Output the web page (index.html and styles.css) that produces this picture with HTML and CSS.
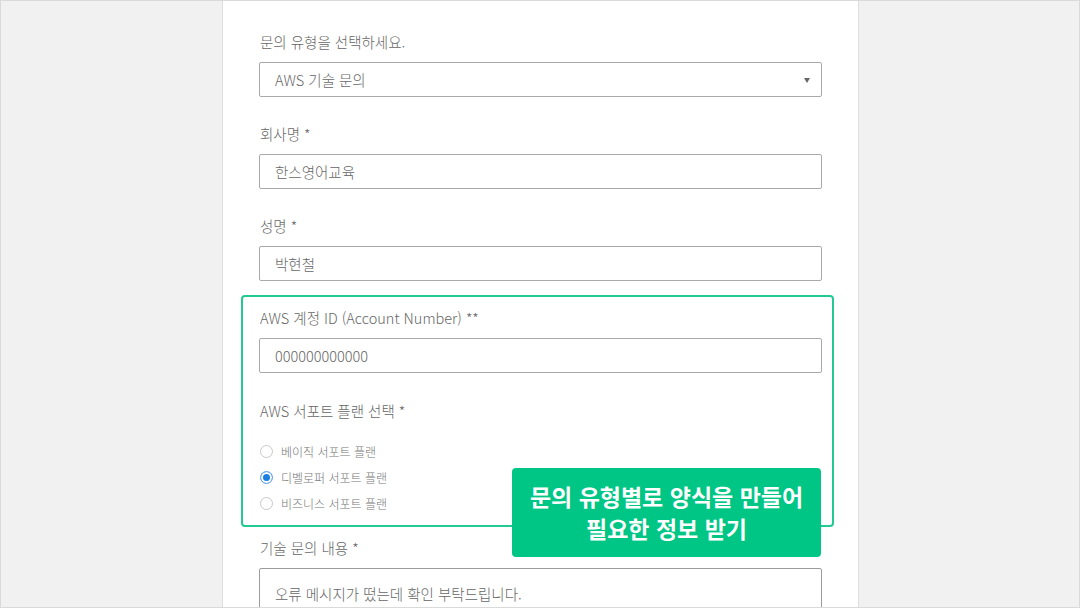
FILE: index.html
```html
<!DOCTYPE html>
<html lang="ko">
<head>
  <meta charset="UTF-8">
  <title>문의하기</title>
  <link rel="stylesheet" href="styles.css">
</head>
<body>
  <div class="panel">
    <div class="field">
      <label class="label">문의 유형을 선택하세요.</label>
      <div class="select">AWS 기술 문의</div>
    </div>

    <div class="field">
      <label class="label">회사명 *</label>
      <div class="input">한스영어교육</div>
    </div>

    <div class="field">
      <label class="label">성명 *</label>
      <div class="input">박현철</div>
    </div>

    <div class="group">
      <div class="field">
        <label class="label">AWS 계정 ID (Account Number) **</label>
        <div class="input">000000000000</div>
      </div>

      <div class="field">
        <label class="label">AWS 서포트 플랜 선택 *</label>
        <div class="radios">
          <label class="radio"><input type="radio" name="plan"> 베이직 서포트 플랜</label>
          <label class="radio"><input type="radio" name="plan" checked> 디벨로퍼 서포트 플랜</label>
          <label class="radio"><input type="radio" name="plan"> 비즈니스 서포트 플랜</label>
        </div>
      </div>
    </div>

    <div class="field field-last">
      <label class="label">기술 문의 내용 *</label>
      <div class="textarea">오류 메시지가 떴는데 확인 부탁드립니다.</div>
    </div>

    <div class="callout">문의 유형별로 양식을 만들어<br>필요한 정보 받기</div>
  </div>
</body>
</html>
```

FILE: styles.css
```css
html, body {
  margin: 0;
  height: 100%;
}
body {
  box-sizing: border-box;
  height: 608px;
  overflow: hidden;
  border: 1px solid #d9dad9;
  background: #f0f1f0;
  font-family: "Noto Sans CJK KR", "Noto Sans", sans-serif;
  font-weight: 300;
  color: #666;
}
.panel {
  position: relative;
  box-sizing: border-box;
  width: 637px;
  height: 100%;
  margin-left: 221px;
  padding: 30px 36px 0 36px;
  background: #fff;
  border-left: 1px solid #dedede;
  border-right: 1px solid #dedede;
}
.field {
  margin-bottom: 26px;
}
.label {
  display: block;
  font-size: 14.5px;
  line-height: 21px;
  margin-bottom: 10px;
  padding-left: 1px;
  color: #666;
}
.input, .select, .textarea {
  box-sizing: border-box;
  height: 35px;
  border: 1px solid #a9a9a9;
  border-radius: 2px;
  padding: 0 15px;
  font-size: 14.5px;
  line-height: 33px;
  color: #666;
}
.select {
  position: relative;
}
.select::after {
  content: "";
  position: absolute;
  right: 11px;
  top: 15px;
  border-left: 3px solid transparent;
  border-right: 3px solid transparent;
  border-top: 5px solid #666;
}
.textarea {
  height: 60px;
  padding-top: 15px;
  line-height: 20px;
  border-color: #9c9c9c;
}
.group {
  margin: -12px -12px 0 -18px;
  padding: 10px 10px 9px 16px;
  border: 2px solid #22c993;
  border-radius: 4px;
}
.group .field {
  margin-bottom: 27px;
}
.group .field:last-child {
  margin-bottom: 0;
}
.radios {
  margin-top: 17px;
}
.radio {
  display: flex;
  align-items: center;
  gap: 8px;
  height: 26px;
  font-size: 12px;
  color: #777;
}
.radio input {
  appearance: none;
  box-sizing: border-box;
  margin: 0 0 0 1px;
  width: 13px;
  height: 13px;
  border: 1px solid #c8c8c8;
  border-radius: 50%;
  background: #fff;
}
.radio input:checked {
  border-color: #6aa8e8;
  background: #1a7fe0;
  box-shadow: inset 0 0 0 2px #fff;
}
.field-last {
  margin-top: 10px;
}
.callout {
  position: absolute;
  left: 289px;
  top: 467px;
  width: 309px;
  height: 89px;
  box-sizing: border-box;
  padding-top: 12px;
  background: #00c685;
  border-radius: 4px;
  color: #fff;
  text-align: center;
  font-size: 23px;
  font-weight: 700;
  line-height: 32px;
}
```
